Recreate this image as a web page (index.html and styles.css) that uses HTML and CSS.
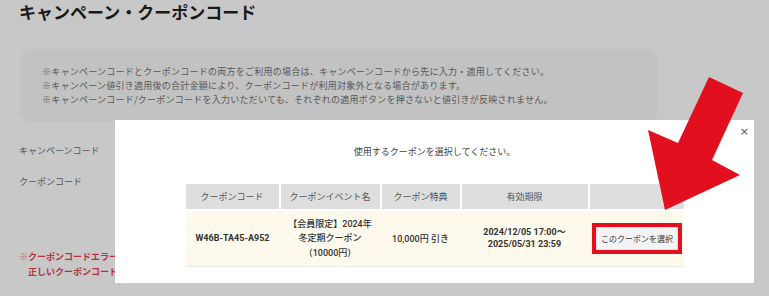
FILE: index.html
```html
<!DOCTYPE html>
<html lang="ja">
<head>
<meta charset="utf-8">
<title>キャンペーン・クーポンコード</title>
<link rel="stylesheet" href="styles.css">
</head>
<body>
<div class="page">
  <h1 class="title">キャンペーン・クーポンコード</h1>
  <div class="notice">
    <p>※キャンペーンコードとクーポンコードの両方をご利用の場合は、キャンペーンコードから先に入力・適用してください。</p>
    <p>※キャンペーン値引き適用後の合計金額により、クーポンコードが利用対象外となる場合があります。</p>
    <p>※キャンペーンコード/クーポンコードを入力いただいても、それぞれの適用ボタンを押さないと値引きが反映されません。</p>
  </div>
  <div class="form">
    <div class="form-row"><span class="label">キャンペーンコード</span></div>
    <div class="form-row"><span class="label">クーポンコード</span></div>
  </div>
  <p class="error"><span class="mark">※</span>クーポンコードエラーです。<br><span class="indent">正しいクーポンコードを入力してください。</span></p>
</div>

<div class="modal">
  <button class="close" type="button">×</button>
  <p class="modal-lead">使用するクーポンを選択してください。</p>
  <table class="coupons">
    <colgroup>
      <col class="c1"><col class="c2"><col class="c3"><col class="c4"><col class="c5">
    </colgroup>
    <thead>
      <tr>
        <th>クーポンコード</th>
        <th>クーポンイベント名</th>
        <th>クーポン特典</th>
        <th>有効期限</th>
        <th></th>
      </tr>
    </thead>
    <tbody>
      <tr>
        <td class="code">W46B-TA45-A952</td>
        <td class="name">【会員限定】2024年<br>冬定期クーポン<br>（10000円）</td>
        <td class="benefit">10,000円 引き</td>
        <td class="period">2024/12/05 17:00〜<br>2025/05/31 23:59</td>
        <td class="action"><span class="highlight"><button class="select" type="button">このクーポンを選択</button></span></td>
      </tr>
    </tbody>
  </table>
</div>

<svg class="arrow" viewBox="640 70 110 145" width="110" height="145" aria-hidden="true">
  <polygon points="709,77 743,93 712,160 740,175 665,210 648,130 678,143" fill="#e20f1f"/>
</svg>
</body>
</html>
```
FILE: styles.css
```css
* { box-sizing: border-box; }

html, body {
  margin: 0;
  padding: 0;
}

body {
  width: 769px;
  height: 296px;
  overflow: hidden;
  background: #c8c8c8;
  font-family: "Noto Sans CJK JP", sans-serif;
  color: #555;
  position: relative;
}

.page {
  padding: 0 0 0 19px;
}

.title {
  margin: 0;
  font-size: 17px;
  line-height: 24px;
  font-weight: 700;
  color: #1a1a1a;
}

.notice {
  margin: 25px 0 0 1px;
  width: 638px;
  height: 73px;
  padding: 16px 0 0 22px;
  background: #c2c2c2;
  border-radius: 12px;
}

.notice p {
  margin: 0;
  font-size: 9px;
  line-height: 14px;
  letter-spacing: 0.25px;
  color: #585858;
  white-space: nowrap;
}

.form {
  margin-top: 22px;
  display: flex;
  flex-direction: column;
  gap: 17px;
}

.form-row {
  height: 14px;
  display: flex;
  align-items: center;
}

.label {
  font-size: 9px;
  line-height: 14px;
  color: #555;
}

.error {
  margin: 60px 0 0;
  font-size: 9px;
  line-height: 15px;
  font-weight: 700;
  color: #b5323f;
  white-space: nowrap;
}

.error .mark {
  color: #c45a68;
}

.error .indent {
  padding-left: 9px;
}

/* modal */
.modal {
  position: absolute;
  left: 115px;
  top: 120px;
  width: 639px;
  height: 163px;
  background: #fff;
  padding-top: 25px;
}

.close {
  position: absolute;
  right: 5px;
  top: 4px;
  border: 0;
  background: none;
  padding: 0;
  font-family: "DejaVu Sans", sans-serif;
  font-size: 11px;
  line-height: 16px;
  color: #555;
}

.modal-lead {
  margin: 0;
  text-align: center;
  font-size: 9px;
  line-height: 14px;
  color: #444;
}

.coupons {
  margin: 25px auto 0;
  width: 498px;
  table-layout: fixed;
  border-collapse: collapse;
}

.c1 { width: 94px; }
.c2 { width: 101px; }
.c3 { width: 80px; }
.c4 { width: 128px; }
.c5 { width: 95px; }

.coupons th {
  height: 26px;
  padding: 0;
  background: #dedede;
  border-right: 2px solid #fff;
  border-bottom: 2px solid #fff;
  font-size: 9px;
  font-weight: 400;
  color: #555;
  text-align: center;
}

.coupons th:last-child {
  border-right: 0;
}

.coupons td {
  height: 56px;
  padding: 0;
  background: #fdf9ec;
  border-bottom: 1px solid #ebebeb;
  text-align: center;
  vertical-align: middle;
  font-family: Roboto, "Noto Sans CJK JP", sans-serif;
  font-size: 9px;
  font-weight: 500;
  color: #333;
}

.coupons td.code {
  font-weight: 700;
}

.coupons td.name {
  line-height: 14.5px;
}

.coupons td.period {
  line-height: 12.5px;
  font-weight: 700;
}

.coupons td.action {
  text-align: center;
}

.highlight {
  display: inline-block;
  border: 4px solid #e20f1f;
  margin-left: 2px;
}

.select {
  display: block;
  width: 82px;
  height: 23px;
  padding: 0;
  background: #f3f3f5;
  border: 1px solid #e2e2e2;
  font-family: "Noto Sans CJK JP", sans-serif;
  font-size: 8px;
  color: #333;
}

.arrow {
  position: absolute;
  left: 640px;
  top: 70px;
}
```
